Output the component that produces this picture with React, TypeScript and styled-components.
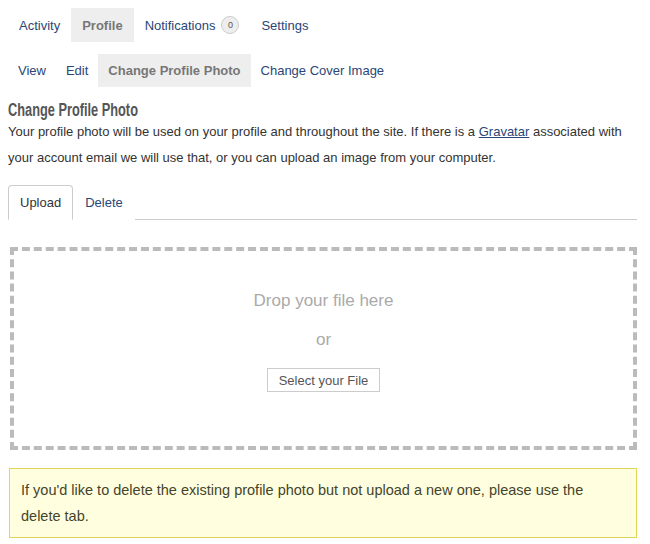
import React from 'react';
import styled, { createGlobalStyle } from 'styled-components';

const GlobalStyle = createGlobalStyle`
  body {
    margin: 8px;
    background: #ffffff;
    font-family: "Liberation Sans", Arial, sans-serif;
    color: #333333;
  }
`;

const Page = styled.div`
  width: 629px;
`;

const NavRow = styled.ul<{ $top?: number; $pad: number }>`
  display: flex;
  list-style: none;
  margin: ${p => p.$top || 0}px 0 0;
  padding: 0;

  li {
    padding: 8px ${p => p.$pad}px;
  }
`;

const NavItem = styled.li<{ $active?: boolean }>`
  display: flex;
  align-items: center;
  font-size: 13px;
  line-height: 17px;
  font-weight: ${p => (p.$active ? 700 : 400)};
  color: ${p => (p.$active ? '#777777' : '#2a4677')};
  background: ${p => (p.$active ? '#eeeeee' : 'transparent')};
`;

const Badge = styled.span`
  display: inline-flex;
  align-items: center;
  justify-content: center;
  width: 16px;
  height: 16px;
  margin-left: 6px;
  border: 1px solid #cccccc;
  border-radius: 50%;
  background: #eeeeee;
  color: #555555;
  font-size: 9px;
  line-height: 1;
`;

const Title = styled.h2`
  margin: 14px 0 0;
  height: 18px;
  font-size: 18px;
  line-height: 18px;
  font-weight: 700;
  color: #555555;
  white-space: nowrap;

  span {
    display: inline-block;
    transform: scaleX(0.71);
    transform-origin: left center;
  }
`;

const Intro = styled.p`
  margin: 0;
  font-size: 13px;
  line-height: 26px;
  color: #333333;

  a {
    color: #2a4677;
    text-decoration: underline;
  }
`;

const Tabs = styled.ul`
  display: flex;
  list-style: none;
  margin: 14px 0 0;
  padding: 0;
  border-bottom: 1px solid #cccccc;
`;

const Tab = styled.li<{ $active?: boolean }>`
  padding: 8px 11px;
  margin-bottom: -1px;
  font-size: 13px;
  line-height: 17px;
  color: ${p => (p.$active ? '#333333' : '#2a4677')};
  background: #ffffff;
  border: 1px solid ${p => (p.$active ? '#cccccc' : 'transparent')};
  border-bottom-color: ${p => (p.$active ? '#ffffff' : 'transparent')};
  border-radius: 4px 4px 0 0;
`;

const DropZone = styled.div`
  display: flex;
  flex-direction: column;
  align-items: center;
  margin: 27px 0 0 2px;
  padding: 40px 0 54px;
  border: 4px dashed #bbbbbb;
`;

const DropText = styled.div<{ $gap?: number }>`
  margin-top: ${p => p.$gap || 0}px;
  font-size: 17px;
  line-height: 20px;
  color: #aaaaaa;
`;

const SelectButton = styled.button`
  margin-top: 18px;
  height: 24px;
  padding: 0 11px;
  border: 1px solid #cccccc;
  background: #ffffff;
  font-family: "Liberation Sans", Arial, sans-serif;
  font-size: 13px;
  color: #555555;
  border-radius: 0;
`;

const Notice = styled.div`
  margin: 18px 0 0 1px;
  padding: 8px 11px;
  background: #ffffe0;
  border: 1px solid #e0d45a;
  font-size: 14.5px;
  line-height: 26px;
  color: #44442a;
`;

export default function App() {
  return (
    <Page>
      <GlobalStyle />
      <NavRow $pad={11}>
        <NavItem>Activity</NavItem>
        <NavItem $active>Profile</NavItem>
        <NavItem>
          Notifications<Badge>0</Badge>
        </NavItem>
        <NavItem>Settings</NavItem>
      </NavRow>
      <NavRow $top={12} $pad={10}>
        <NavItem>View</NavItem>
        <NavItem>Edit</NavItem>
        <NavItem $active>Change Profile Photo</NavItem>
        <NavItem>Change Cover Image</NavItem>
      </NavRow>

      <Title>
        <span>Change Profile Photo</span>
      </Title>
      <Intro>
        Your profile photo will be used on your profile and throughout the site. If there is a{' '}
        <a href="#">Gravatar</a> associated with your account email we will use that, or you can
        upload an image from your computer.
      </Intro>

      <Tabs>
        <Tab $active>Upload</Tab>
        <Tab>Delete</Tab>
      </Tabs>

      <DropZone>
        <DropText>Drop your file here</DropText>
        <DropText $gap={19}>or</DropText>
        <SelectButton>Select your File</SelectButton>
      </DropZone>

      <Notice>
        If you'd like to delete the existing profile photo but not upload a new one, please use the
        delete tab.
      </Notice>
    </Page>
  );
}
